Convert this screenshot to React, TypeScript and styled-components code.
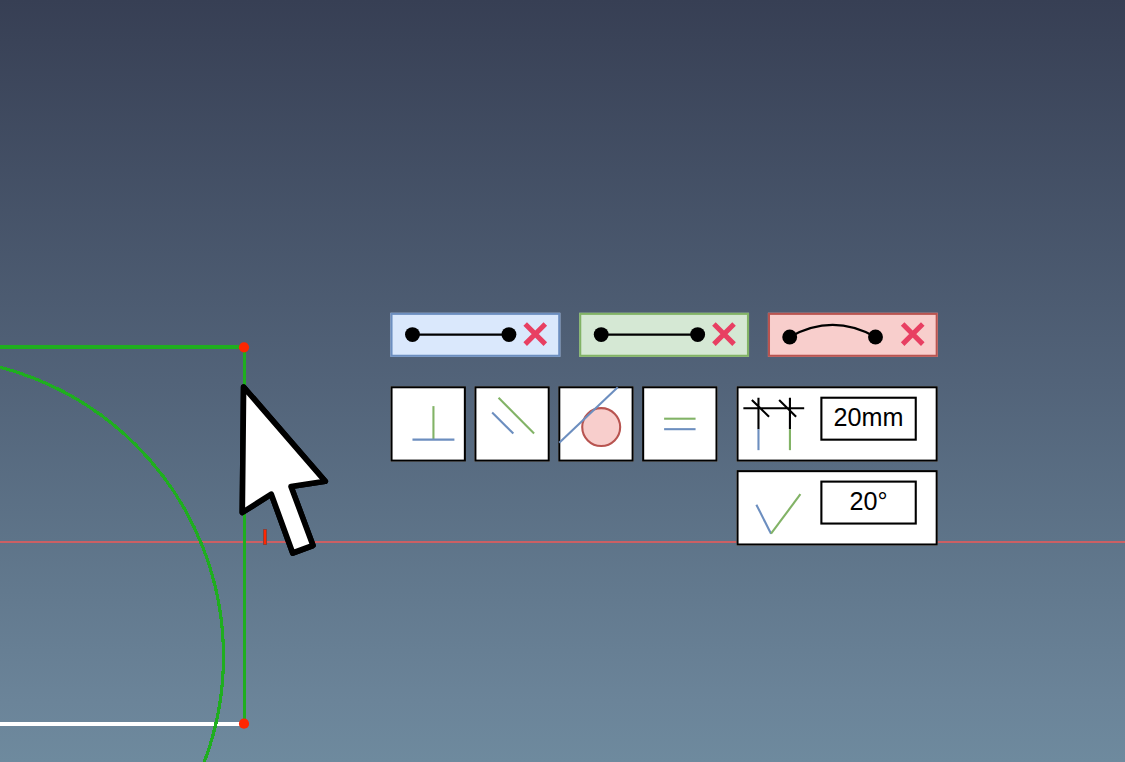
import React from "react";
import styled, { createGlobalStyle } from "styled-components";

const BLUE = "#6c8ebf";
const GREEN = "#82b366";
const RED = "#b85450";
const SKETCH = "#1fae1f";

const GlobalStyle = createGlobalStyle`
  html, body { margin: 0; padding: 0; overflow: hidden; }
`;

const Viewport = styled.main`
  position: relative;
  box-sizing: border-box;
  width: 1125px;
  height: 762px;
  padding: 313px 0 0 390px;
  overflow: hidden;
  font-family: "Liberation Sans", Arial, sans-serif;
  background: linear-gradient(to bottom, #373f54 0%, #526379 50%, #5e7489 71%, #6b8499 92%, #6e8a9e 100%);
`;

const SketchLayer = styled.svg`
  position: absolute;
  left: 0;
  top: 0;
  display: block;
`;

const Pointer = styled.path`
  filter: drop-shadow(0 0 0.7px #000);
`;

/* The panel is laid out on a 10-unit grid and magnified as a whole. */
const Panel = styled.section`
  position: relative;
  display: flex;
  flex-direction: column;
  gap: 28px;
  width: 522px;
  transform: translate(0.45px, -0.2px) scale(1.0485);
  transform-origin: 0 0;
`;

const SelectionRow = styled.div`
  display: flex;
  gap: 18px;
`;

const SelectionChip = styled.div<{ $fill: string; $line: string }>`
  box-sizing: border-box;
  width: 162px;
  height: 42px;
  border: 2px solid ${(p) => p.$line};
  background: ${(p) => p.$fill};
`;

const ConstraintArea = styled.div`
  display: flex;
  justify-content: space-between;
  align-items: flex-start;
`;

const ConstraintRow = styled.div`
  display: flex;
  gap: 8px;
`;

const ConstraintButton = styled.div`
  box-sizing: border-box;
  width: 72px;
  height: 72px;
  border: 2px solid #000;
  background: #fff;
`;

const DimensionColumn = styled.div`
  display: flex;
  flex-direction: column;
  gap: 8px;
`;

const DimensionCard = styled.div`
  box-sizing: border-box;
  display: flex;
  align-items: flex-start;
  justify-content: space-between;
  width: 192px;
  height: 72px;
  padding: 8px 18px 0 0;
  border: 2px solid #000;
  background: #fff;
`;

const ValueBox = styled.div`
  box-sizing: border-box;
  display: flex;
  align-items: center;
  justify-content: center;
  width: 92px;
  height: 42px;
  padding-bottom: 2px;
  border: 2px solid #000;
  color: #000;
  font-size: 24px;
  line-height: 28px;
`;

const Glyph = styled.svg`
  display: block;
  flex: none;
  overflow: visible;
`;

const DimensionGlyph = styled(Glyph)`
  margin-top: -8px;
`;

const Cross = () => (
  <path d="M126.5 8.7L145.7 27.9M145.7 8.7L126.5 27.9" stroke="#e83f62" strokeWidth="4.8" />
);

const EdgeGlyph = () => (
  <Glyph width="158" height="38" fill="none">
    <path d="M19 18.8H111" stroke="#000" strokeWidth="2" />
    <circle cx="19" cy="18.8" r="7.1" fill="#000" />
    <circle cx="111" cy="18.8" r="7.1" fill="#000" />
    <Cross />
  </Glyph>
);

const ArcGlyph = () => (
  <Glyph width="158" height="38" fill="none">
    <path d="M18.8 21.1Q59.7 -2 100.6 21.1" stroke="#000" strokeWidth="2" />
    <circle cx="18.8" cy="21.1" r="7.1" fill="#000" />
    <circle cx="100.6" cy="21.1" r="7.1" fill="#000" />
    <Cross />
  </Glyph>
);

const Tile = ({ children }: { children: React.ReactNode }) => (
  <ConstraintButton>
    <Glyph width="68" height="68" fill="none" strokeWidth="2">{children}</Glyph>
  </ConstraintButton>
);

export default function App() {
  return (
    <Viewport>
      <GlobalStyle />
      <SketchLayer width="1125" height="762" fill="none">
        <path d="M0 542H1125" stroke="#cb6064" strokeWidth="2" />
        <path d="M0 724H244" stroke="#fff" strokeWidth="4" />
        <path d="M0 347H244" stroke={SKETCH} strokeWidth="4" />
        <path d="M244.5 347V724" stroke={SKETCH} strokeWidth="3" />
        <circle cx="-75.5" cy="656.5" r="299" stroke={SKETCH} strokeWidth="3.2" shapeRendering="crispEdges" />
        <circle cx="244" cy="347.3" r="5.1" fill="#ff2600" />
        <circle cx="244" cy="723.7" r="5.1" fill="#ff2600" />
        <rect x="263.5" y="529.5" width="3" height="15" fill="#ff2600" stroke="#8c4039" strokeWidth="1" />
        <Pointer
          d="M243.6 387L325.3 481.3L291 486.4L313 545.5L292.7 553L271.3 494.2L242.3 512.5Z"
          fill="#fff"
          stroke="#000"
          strokeWidth="5.6"
          strokeLinejoin="round"
        />
      </SketchLayer>
      <Panel>
        <SelectionRow>
          <SelectionChip $fill="#dae8fc" $line={BLUE}><EdgeGlyph /></SelectionChip>
          <SelectionChip $fill="#d5e8d4" $line={GREEN}><EdgeGlyph /></SelectionChip>
          <SelectionChip $fill="#f8cecc" $line={RED}><ArcGlyph /></SelectionChip>
        </SelectionRow>
        <ConstraintArea>
          <ConstraintRow>
            <Tile>
              <path d="M39 49V17" stroke={GREEN} />
              <path d="M19 49H59" stroke={BLUE} />
            </Tile>
            <Tile>
              <path d="M21.1 9L55 43.2" stroke={GREEN} />
              <path d="M15 23L35.2 43.2" stroke={BLUE} />
            </Tile>
            <Tile>
              <circle cx="39" cy="37" r="18.1" fill="#f8cecc" stroke={RED} />
              <path d="M-1 52L54.8-1" stroke={BLUE} />
            </Tile>
            <Tile>
              <path d="M19 29H49" stroke={GREEN} />
              <path d="M19 39H49" stroke={BLUE} />
            </Tile>
          </ConstraintRow>
          <DimensionColumn>
            <DimensionCard>
              <DimensionGlyph width="68" height="68" fill="none" strokeWidth="2">
                <path d="M4.6 19H62.6M19 9V39M49 9V39M12.7 11.2L29.1 27.1M38.7 11.2L54.9 27.1" stroke="#000" />
                <path d="M19 39V59" stroke={BLUE} />
                <path d="M49 39V59" stroke={GREEN} />
              </DimensionGlyph>
              <ValueBox>20mm</ValueBox>
            </DimensionCard>
            <DimensionCard>
              <DimensionGlyph width="68" height="68" fill="none" strokeWidth="2">
                <path d="M17 31L31 58.7" stroke={BLUE} />
                <path d="M31 58.7L59 21" stroke={GREEN} />
              </DimensionGlyph>
              <ValueBox>20°</ValueBox>
            </DimensionCard>
          </DimensionColumn>
        </ConstraintArea>
      </Panel>
    </Viewport>
  );
}
